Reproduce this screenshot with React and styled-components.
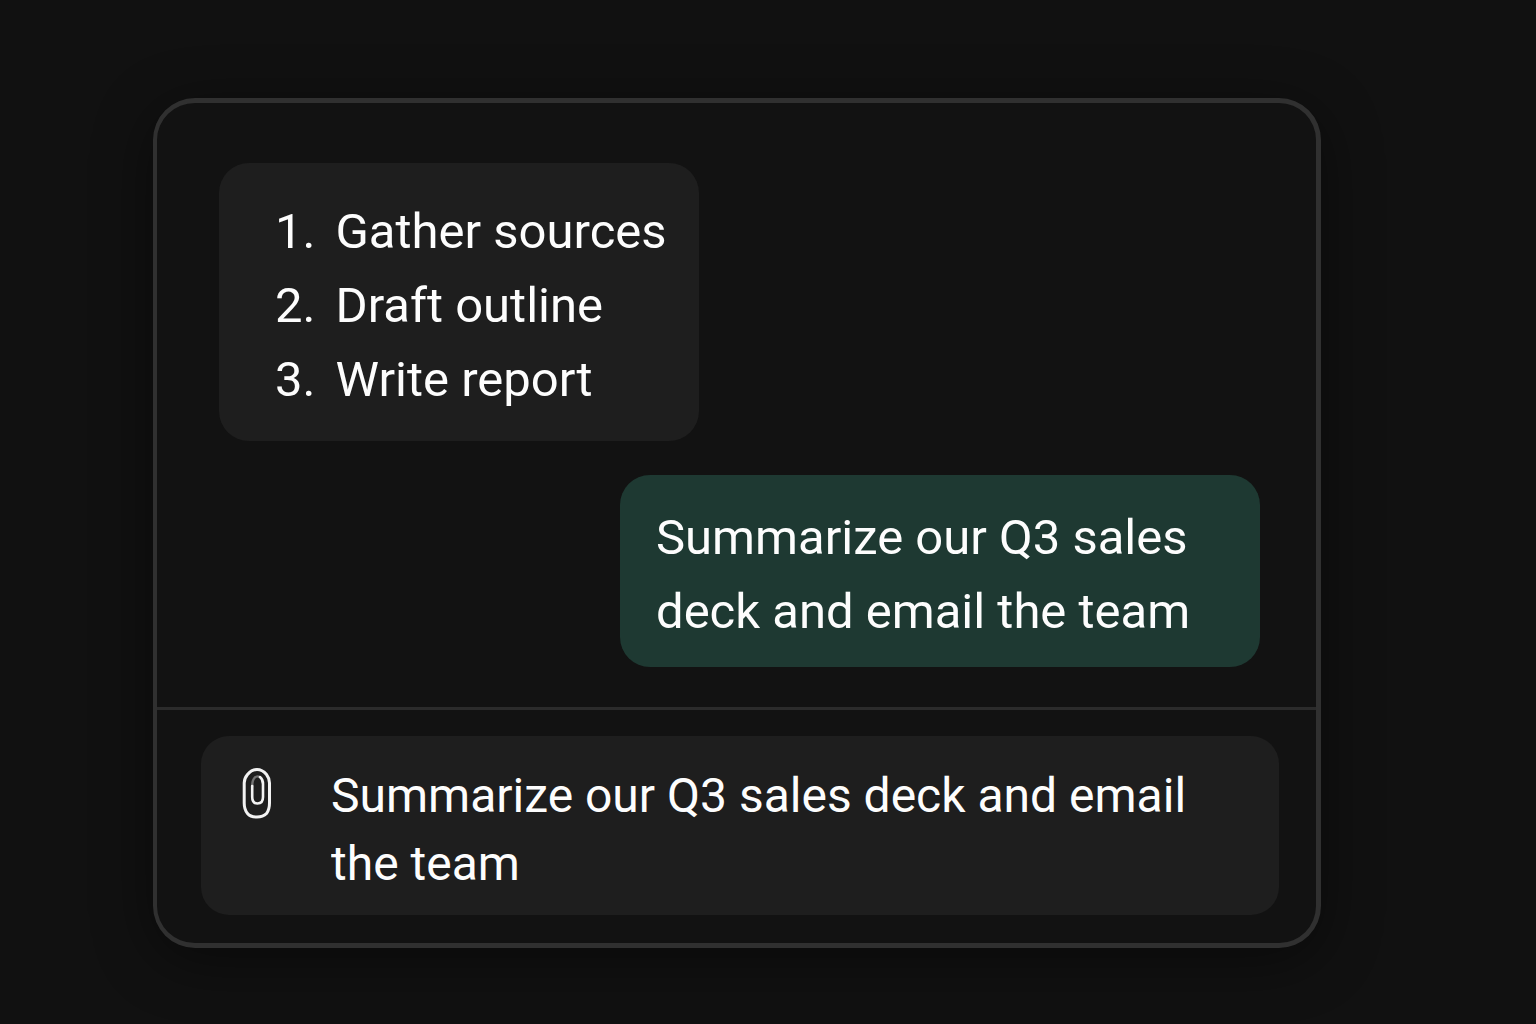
import React, { useState } from "react";
import styled, { createGlobalStyle } from "styled-components";

const GlobalStyle = createGlobalStyle`
  * {
    box-sizing: border-box;
  }

  body {
    margin: 0;
    background-color: #111111;
    color: #fdfdfd;
    font-family: Roboto, "Liberation Sans", sans-serif;
    font-size: 48px;
  }
`;

const Page = styled.div`
  min-height: 100vh;
  display: flex;
  padding: 98px 215px 76px 153px;
`;

const Card = styled.main`
  flex: 1;
  display: flex;
  flex-direction: column;
  background-color: #121212;
  border: 5px solid #303030;
  border-left-width: 4px;
  border-radius: 42px;
  box-shadow: 0 12px 60px rgba(0, 0, 0, 0.45);
`;

const Messages = styled.section`
  flex: 1;
  display: flex;
  flex-direction: column;
  gap: 34px;
  padding: 60px 56px 40px 62px;
`;

const Bubble = styled.div`
  align-self: ${({ $mine }) => ($mine ? "flex-end" : "flex-start")};
  width: 100%;
  max-width: ${({ $mine }) => ($mine ? "640px" : "480px")};
  padding: ${({ $mine }) => ($mine ? "26px 36px 18px" : "32px 0 24px 56px")};
  background-color: ${({ $mine }) => ($mine ? "#1e3932" : "#1e1e1e")};
  border-radius: 30px;
  font-size: 49px;
  line-height: 74px;
`;

const Text = styled.p`
  margin: 0;
`;

const Steps = styled.ol`
  list-style: none;
  margin: 0;
  padding: 0;
`;

const Step = styled.li`
  display: flex;
  gap: 20px;
  white-space: nowrap;
`;

const Number = styled.span`
  min-width: 40px;
  text-align: right;
`;

const Footer = styled.footer`
  padding: 26px 37px 28px 44px;
  border-top: 3px solid #2b2b2b;
`;

const Composer = styled.form`
  display: flex;
  align-items: flex-start;
  gap: 54px;
  padding: 26px 36px 17px;
  background-color: #1e1e1e;
  border-radius: 28px;
`;

const AttachButton = styled.button`
  display: flex;
  padding: 4px;
  border: none;
  background: none;
  color: #f2f2f2;
  cursor: pointer;
`;

const Input = styled.textarea`
  flex: 1;
  min-width: 0;
  height: 136px;
  padding: 0;
  border: none;
  outline: none;
  resize: none;
  overflow: hidden;
  background: none;
  color: inherit;
  font: inherit;
  line-height: 68px;
`;

const steps = ["Gather sources", "Draft outline", "Write report"];

function PaperclipIcon() {
  return (
    <svg width="32" height="54" viewBox="0 0 32 54" fill="none" stroke="currentColor" strokeLinecap="round">
      <path
        d="M16 3.5C12 3.5 9 5.5 6.5 8.500C4 11.500 3.200 14 3.200 17V37C3.200 41 4 44.500 6.500 47.500C8.500 50 11 51 16 51S23 50 25.500 47.500C27.800 44.500 28.500 41 28.500 37V17C28.500 14 27.800 11.500 25.500 8.500C23 5.500 20 3.500 16 3.500Z"
        strokeWidth="3"
      />
      <path d="M11.200 20V31C11.200 35 13 37.500 16.500 37.500S22 35 22 31V18C22 14.500 21 12.500 19 11" strokeWidth="2.600" />
      <path d="M19 11C15 9 11.200 12 11.200 20" strokeWidth="2.400" opacity="0.400" />
    </svg>
  );
}

function App() {
  const [draft, setDraft] = useState("Summarize our Q3 sales deck and email the team");

  return (
    <>
      <GlobalStyle />
      <Page>
        <Card>
          <Messages>
            <Bubble>
              <Steps>
                {steps.map((step, i) => (
                  <Step key={step}>
                    <Number>{i + 1}.</Number>
                    <span>{step}</span>
                  </Step>
                ))}
              </Steps>
            </Bubble>
            <Bubble $mine>
              <Text>Summarize our Q3 sales deck and email the team</Text>
            </Bubble>
          </Messages>
          <Footer>
            <Composer onSubmit={(e) => e.preventDefault()}>
              <AttachButton type="button" aria-label="Attach file">
                <PaperclipIcon />
              </AttachButton>
              <Input
                aria-label="Message"
                rows={2}
                spellCheck={false}
                value={draft}
                onChange={(e) => setDraft(e.target.value)}
              />
            </Composer>
          </Footer>
        </Card>
      </Page>
    </>
  );
}

export default App;
